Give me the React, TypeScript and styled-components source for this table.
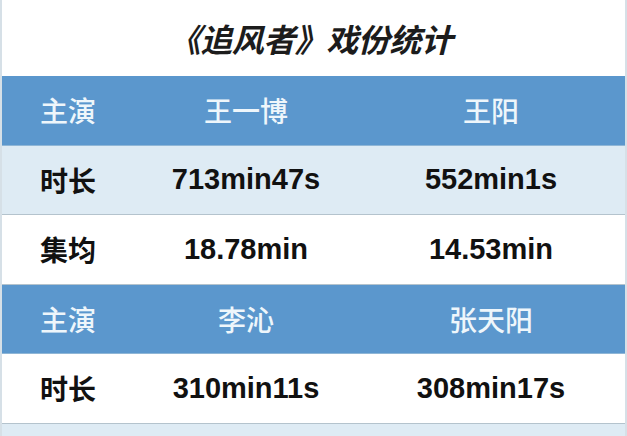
import * as React from 'react';
import styled, { createGlobalStyle } from 'styled-components';

type Kind = 'head' | 'light' | 'plain';
type Row = { kind: Kind; label: string; a: string; b: string };

const rows: Row[] = [
    { kind: 'head', label: '主演', a: '王一博', b: '王阳' },
    { kind: 'light', label: '时长', a: '713min47s', b: '552min1s' },
    { kind: 'plain', label: '集均', a: '18.78min', b: '14.53min' },
    { kind: 'head', label: '主演', a: '李沁', b: '张天阳' },
    { kind: 'plain', label: '时长', a: '310min11s', b: '308min17s' },
    // next row is only peeking in at the bottom edge
    { kind: 'light', label: '', a: '', b: '' },
];

const GlobalStyle = createGlobalStyle`
  html, body {
    margin: 0;
    padding: 0;
    background: #ffffff;
    overflow: hidden;
  }
  body {
    font-family: "Noto Sans CJK SC", "Liberation Sans", sans-serif;
  }
`;

const App = () => {
    return (
        <>
            <GlobalStyle/>
            <Page>
                <Title>《追风者》戏份统计</Title>
                {rows.map((r, i) => (
                    <TableRow key={i} $kind={r.kind}>
                        <Label $head={r.kind === 'head'}>{r.label}</Label>
                        <Value $head={r.kind === 'head'}>{r.a}</Value>
                        <Value $head={r.kind === 'head'}>{r.b}</Value>
                    </TableRow>
                ))}
            </Page>
        </>
    )
}

const Page = styled.div`
  width: 627px;
  height: 436px;
  box-sizing: border-box;
  border-left: 2px solid #d6e0e7;
  border-right: 2px solid #d6e0e7;
  overflow: hidden;
`;
const Title = styled.div`
  height: 76px;
  display: flex;
  align-items: center;
  justify-content: center;
  padding-right: 6px;
  box-sizing: border-box;
  font-family: "Noto Sans CJK SC", sans-serif;
  font-size: 32px;
  font-weight: 700;
  font-style: italic;
  color: #1c1c1c;
  letter-spacing: -0.5px;
`;
const TableRow = styled.div<{ $kind: Kind }>`
  display: grid;
  grid-template-columns: 133px 222px 1fr;
  align-items: center;
  height: 69.5px;
  box-sizing: border-box;
  border-bottom: 1px solid ${p => p.$kind === 'head' ? '#8fb6d6' : '#b4c3cd'};
  background: ${p => p.$kind === 'head' ? '#5b97cd' : p.$kind === 'light' ? '#deebf4' : '#ffffff'};
`;
const Label = styled.div<{ $head: boolean }>`
  padding-left: 38px;
  font-family: "Noto Sans CJK SC", sans-serif;
  font-size: 28px;
  font-weight: ${p => p.$head ? 500 : 700};
  color: ${p => p.$head ? '#eef6fb' : '#111111'};
  line-height: 1;
`;
const Value = styled.div<{ $head: boolean }>`
  text-align: center;
  font-family: ${p => p.$head ? '"Noto Sans CJK SC", sans-serif' : '"Liberation Sans", "Noto Sans CJK SC", sans-serif'};
  font-size: ${p => p.$head ? '28px' : '29px'};
  font-weight: ${p => p.$head ? 500 : 700};
  color: ${p => p.$head ? '#eef6fb' : '#111111'};
  line-height: 1;
`;

export default App;
